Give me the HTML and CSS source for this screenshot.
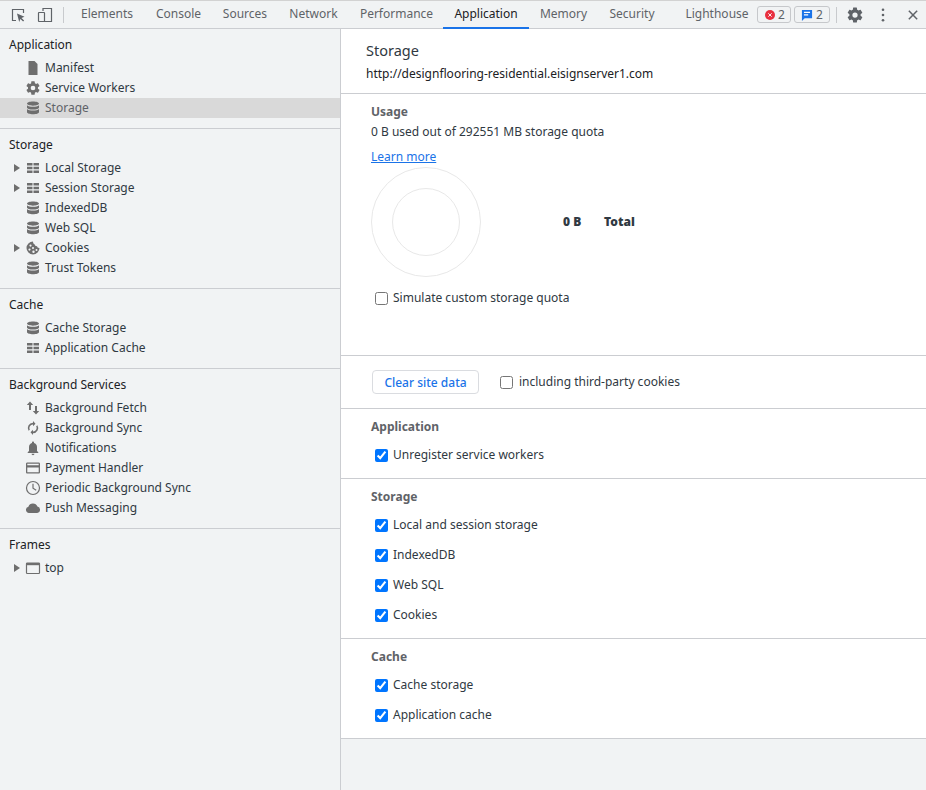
FILE: index.html
```html
<!DOCTYPE html>
<html lang="en">
<head>
<meta charset="utf-8">
<title>Storage - DevTools</title>
<link rel="stylesheet" href="styles.css">
</head>
<body>
<svg class="defs" width="0" height="0" aria-hidden="true">
  <symbol id="i-db" viewBox="0 0 16 16"><path d="M8 1.5c3.3 0 6 .9 6 2.1S11.300 5.700 8 5.700 2 4.800 2 3.600 4.700 1.500 8 1.500zM2 5.200c1 1 3.500 1.500 6 1.500s5-.5 6-1.500v2.300c0 1.200-2.700 2.100-6 2.100s-6-.9-6-2.100zM2 9.100c1 1 3.500 1.500 6 1.500s5-.5 6-1.500v2.900c0 1.300-2.700 2.300-6 2.300S2 13.300 2 12z"/></symbol>
  <symbol id="i-grid" viewBox="0 0 16 16"><path d="M2 3h5.500v2.600H2zM8.500 3H14v2.600H8.500zM2 6.700h5.500v2.600H2zM8.500 6.700H14v2.600H8.500zM2 10.400h5.500V13H2zM8.500 10.400H14V13H8.500z"/></symbol>
  <symbol id="i-gear" viewBox="0 0 24 24"><path d="M19.400 13c.04-.3.1-.65.100-1s-.03-.7-.08-1l2.100-1.650c.2-.15.25-.42.120-.64l-2-3.460c-.12-.22-.39-.3-.61-.22l-2.490 1c-.52-.4-1.080-.73-1.690-.98l-.38-2.650A.49.49 0 0 0 14 2h-4c-.25 0-.46.18-.49.42l-.38 2.650c-.61.25-1.170.59-1.690.98l-2.490-1c-.23-.09-.49 0-.61.22l-2 3.460c-.13.22-.07.49.12.640L4.570 11c-.05.32-.07.660-.07 1s.02.680.07 1l-2.110 1.650c-.19.150-.25.420-.12.640l2 3.460c.12.220.39.3.61.220l2.490-1c.52.4 1.080.73 1.690.98l.38 2.650c.03.24.24.42.49.42h4c.25 0 .46-.18.49-.42l.38-2.650c.61-.25 1.170-.59 1.690-.98l2.490 1c.23.09.49 0 .61-.22l2-3.460c.12-.22.07-.49-.12-.64zM12 15.500a3.500 3.500 0 1 1 0-7 3.500 3.500 0 0 1 0 7z"/></symbol>
</svg>

<div class="app">
  <header class="toolbar">
    <div class="tool-left">
      <svg class="tool-ico" viewBox="0 0 16 16" width="16" height="16"><path class="ln" d="M6 13.500H2.500V2.500h11V6"/><path class="fl" d="M7 6.500l7.500 3.200-3 1.200 2.600 2.700-1 1-2.700-2.700-1.200 3z"/></svg>
      <svg class="tool-ico dev" viewBox="0 0 16 16" width="16" height="16"><path class="ln" d="M6 4V1.500h8.500v13H7"/><rect class="ln" x="1.500" y="5.500" width="6" height="9" rx=".5"/></svg>
      <span class="vsep"></span>
    </div>
    <nav class="tabs">
      <a class="tab">Elements</a><a class="tab">Console</a><a class="tab">Sources</a><a class="tab">Network</a><a class="tab">Performance</a><a class="tab active">Application</a><a class="tab">Memory</a><a class="tab">Security</a><span></span><a class="tab">Lighthouse</a>
    </nav>
    <div class="tool-right">
      <span class="badge"><svg viewBox="0 0 12 12" width="10" height="10"><circle cx="6" cy="6" r="6" fill="#e8303f"/><path d="M4 4l4 4M8 4l-4 4" stroke="#fff" stroke-width="1.100"/></svg>2</span>
      <span class="badge info"><svg viewBox="0 0 13 13" width="12" height="12"><path fill="#1a73e8" d="M1 1h11v9H4l-3 3z"/><path d="M3.200 3.700h6.600M3.200 6.400h4.600" stroke="#fff" stroke-width="1.200"/></svg>2</span>
      <span class="vsep wide"></span>
      <svg class="gear" viewBox="0 0 24 24" width="18" height="18"><use href="#i-gear"/></svg>
      <svg class="kebab" viewBox="0 0 4 16" width="4" height="14"><circle cx="2" cy="2" r="1.500"/><circle cx="2" cy="8" r="1.500"/><circle cx="2" cy="14" r="1.500"/></svg>
      <svg class="close" viewBox="0 0 12 12" width="10" height="10"><path d="M1 1l10 10M11 1L1 11"/></svg>
    </div>
  </header>

  <div class="body">
    <aside class="sidebar">
      <section class="side-sec">
        <h3 class="side-head">Application</h3>
        <div class="row"><span class="arrow"></span><svg class="ico" viewBox="0 0 16 16"><path d="M3.500 1H9.500L12.500 4V15H3.500z"/></svg><span>Manifest</span></div>
        <div class="row"><span class="arrow"></span><svg class="ico" viewBox="0 0 24 24"><use href="#i-gear"/></svg><span>Service Workers</span></div>
        <div class="row selected"><span class="arrow"></span><svg class="ico"><use href="#i-db"/></svg><span>Storage</span></div>
      </section>
      <section class="side-sec">
        <h3 class="side-head">Storage</h3>
        <div class="row"><span class="arrow on"></span><svg class="ico"><use href="#i-grid"/></svg><span>Local Storage</span></div>
        <div class="row"><span class="arrow on"></span><svg class="ico"><use href="#i-grid"/></svg><span>Session Storage</span></div>
        <div class="row"><span class="arrow"></span><svg class="ico"><use href="#i-db"/></svg><span>IndexedDB</span></div>
        <div class="row"><span class="arrow"></span><svg class="ico"><use href="#i-db"/></svg><span>Web SQL</span></div>
        <div class="row"><span class="arrow on"></span><svg class="ico" viewBox="0 0 16 16"><path fill-rule="evenodd" d="M8 1.500a6.500 6.500 0 1 0 6.500 6.500c-1.300.2-2.200-.5-2.400-1.700-1.300.1-2.300-.7-2.500-2C8.500 4 8 2.800 8 1.500zM5.500 4.500a1.100 1.100 0 1 1 0 2.200 1.100 1.100 0 0 1 0-2.200zM4.500 8.500a1.100 1.100 0 1 1 0 2.200 1.100 1.100 0 0 1 0-2.200zM8 7a1 1 0 1 1 0 2 1 1 0 0 1 0-2zM8.500 10.500a1.200 1.200 0 1 1 0 2.400 1.200 1.200 0 0 1 0-2.400zM11.500 9a1 1 0 1 1 0 2 1 1 0 0 1 0-2z"/></svg><span>Cookies</span></div>
        <div class="row"><span class="arrow"></span><svg class="ico"><use href="#i-db"/></svg><span>Trust Tokens</span></div>
      </section>
      <section class="side-sec">
        <h3 class="side-head">Cache</h3>
        <div class="row"><span class="arrow"></span><svg class="ico"><use href="#i-db"/></svg><span>Cache Storage</span></div>
        <div class="row"><span class="arrow"></span><svg class="ico"><use href="#i-grid"/></svg><span>Application Cache</span></div>
      </section>
      <section class="side-sec">
        <h3 class="side-head">Background Services</h3>
        <div class="row"><span class="arrow"></span><svg class="ico" viewBox="0 0 16 16"><path d="M5 1.500L8.200 5H6v5H4V5H1.800zM11 14.500L7.800 11H10V6h2v5h2.200z"/></svg><span>Background Fetch</span></div>
        <div class="row"><span class="arrow"></span><svg class="ico" viewBox="0 0 16 16"><path d="M8 1v1.800a5.200 5.200 0 0 0-4.400 8L4.800 9.700A3.500 3.500 0 0 1 8 4.500v1.800l2.500-2.650zM12.400 5.200l-1.200 1.100A3.500 3.500 0 0 1 8 11.500V9.700L5.500 12.350 8 15v-1.800a5.200 5.200 0 0 0 4.400-8z"/></svg><span>Background Sync</span></div>
        <div class="row"><span class="arrow"></span><svg class="ico" viewBox="0 0 16 16"><path d="M8 1.500c.6 0 1 .4 1 1v.6c1.800.5 3 2 3 4V11l1.300 1.300v.7H2.700v-.7L4 11V7.100c0-2 1.200-3.500 3-4v-.6c0-.6.4-1 1-1zM6.500 13.800h3A1.500 1.500 0 0 1 8 15.200a1.500 1.500 0 0 1-1.500-1.400z"/></svg><span>Notifications</span></div>
        <div class="row"><span class="arrow"></span><svg class="ico" viewBox="0 0 16 16"><path fill-rule="evenodd" d="M2.300 2.500h11.400c.7 0 1.300.6 1.300 1.300v8.400c0 .7-.6 1.300-1.300 1.300H2.300c-.7 0-1.300-.6-1.300-1.300V3.800c0-.7.600-1.300 1.300-1.300zM2.300 3.800v1.400h11.400V3.800zM2.300 7.600v4.600h11.400V7.600z"/></svg><span>Payment Handler</span></div>
        <div class="row"><span class="arrow"></span><svg class="ico" viewBox="0 0 16 16"><circle class="ol" cx="8" cy="8" r="6.500"/><path class="ol" d="M8 3.800V8.200l3.200 2"/></svg><span>Periodic Background Sync</span></div>
        <div class="row"><span class="arrow"></span><svg class="ico" viewBox="0 0 16 16"><path d="M4 13a3.200 3.200 0 0 1-.6-6.300A4.800 4.800 0 0 1 12.400 6.500 3.300 3.300 0 0 1 12.200 13z"/></svg><span>Push Messaging</span></div>
      </section>
      <section class="side-sec">
        <h3 class="side-head">Frames</h3>
        <div class="row"><span class="arrow on"></span><svg class="ico" viewBox="0 0 16 16"><rect class="ol" x="1.500" y="3" width="13" height="10.500" rx=".8"/><path d="M1.500 3h13v2.200h-13z"/></svg><span>top</span></div>
      </section>
    </aside>

    <main class="main">
      <div class="main-head">
        <h1 class="title">Storage</h1>
        <div class="origin">http://designflooring-residential.eisignserver1.com</div>
      </div>

      <section class="sec usage">
        <h2 class="sec-title">Usage</h2>
        <p class="quota">0 B used out of 292551 MB storage quota</p>
        <a class="link" href="#">Learn more</a>
        <div class="chart-wrap">
          <svg class="chart" width="110" height="110" viewBox="0 0 110 110"><circle cx="55" cy="55" r="54.500"/><circle cx="55" cy="55" r="33.500"/></svg>
          <div class="legend"><b class="lg-val">0 B</b><b>Total</b></div>
        </div>
        <label class="check sim"><input type="checkbox"><span>Simulate custom storage quota</span></label>
      </section>

      <section class="sec clear">
        <button class="btn" type="button">Clear site data</button>
        <label class="check third"><input type="checkbox"><span>including third-party cookies</span></label>
      </section>

      <section class="sec opts">
        <h2 class="sec-title">Application</h2>
        <label class="check"><input type="checkbox" checked><span>Unregister service workers</span></label>
      </section>

      <section class="sec opts">
        <h2 class="sec-title">Storage</h2>
        <label class="check"><input type="checkbox" checked><span>Local and session storage</span></label>
        <label class="check"><input type="checkbox" checked><span>IndexedDB</span></label>
        <label class="check"><input type="checkbox" checked><span>Web SQL</span></label>
        <label class="check"><input type="checkbox" checked><span>Cookies</span></label>
      </section>

      <section class="sec opts">
        <h2 class="sec-title">Cache</h2>
        <label class="check"><input type="checkbox" checked><span>Cache storage</span></label>
        <label class="check"><input type="checkbox" checked><span>Application cache</span></label>
      </section>
    </main>
  </div>
</div>
</body>
</html>
```
FILE: styles.css
```css
* { box-sizing: border-box; }
html, body { margin: 0; height: 100%; }
body { font: 12px/18px "Noto Sans", sans-serif; color: #303942; background: #f1f3f4; overflow: hidden; }
.defs { position: absolute; }
.app { height: 790px; display: flex; flex-direction: column; }

.toolbar { height: 29px; flex: none; display: flex; align-items: stretch; background: #f1f3f4; border-top: 1px solid #d2d2d2; border-bottom: 1px solid #cbcdd1; }
.tool-left { width: 70px; display: flex; align-items: center; padding-left: 10px; }
.tool-ico { flex: none; }
.tool-ico.dev { margin-left: 11px; }
.ln { fill: none; stroke: #5f6368; stroke-width: 1.200; }
.fl { fill: #5f6368; }
.vsep { width: 1px; height: 16px; background: #c8cacd; margin-left: 10px; }
.tabs { display: grid; grid-template-columns: 74px 69px 64px 73px 93px 86px 69px 68px 9px 84px; }
.tab { display: flex; align-items: center; justify-content: center; color: #5f6368; height: 27px; padding-bottom: 1px; }
.tab.active { color: #202124; border-bottom: 2px solid #1a73e8; height: 28px; padding-bottom: 0; }
.tool-right { flex: 1; display: flex; align-items: center; padding-left: 0; margin-left: -2px; }
.badge { display: inline-flex; align-items: center; gap: 3px; height: 17px; width: 34px; padding-left: 7px; margin-right: 3px; border: 1px solid #c6c8cb; border-radius: 3px; color: #5f6368; }
.badge.info { width: 36px; padding-left: 6px; }
.vsep.wide { margin-left: 3px; margin-right: 9px; }
.gear { fill: #5f6368; flex: none; }
.kebab { fill: #5f6368; margin-left: 17px; flex: none; }
.close { fill: none; stroke: #5f6368; stroke-width: 1.800; margin-left: 23px; flex: none; }

.body { flex: 1; display: flex; min-height: 0; }
.sidebar { width: 341px; flex: none; background: #f1f3f4; border-right: 1px solid #cbcdd1; color: #303942; }
.side-sec { padding-bottom: 10px; border-bottom: 1px solid #cbcdd1; }
.side-sec:last-child { border-bottom: 0; }
.side-head { margin: 0; height: 29px; padding: 7px 0 0 9px; font: 400 12px/18px "Noto Sans", sans-serif; color: #202124; }
.row { height: 20px; display: flex; align-items: center; padding-left: 14px; }
.row.selected { background: #d9d9d9; color: #5f6368; }
.arrow { width: 10px; flex: none; }
.arrow.on { width: 0; height: 0; margin-right: 4px; border-left: 6px solid #6e6e6e; border-top: 4px solid transparent; border-bottom: 4px solid transparent; }
.ico { width: 16px; height: 16px; margin: 0 4px 0 1px; fill: #6e6e6e; flex: none; }
.ol { fill: none; stroke: #6e6e6e; stroke-width: 1.200; }

.main { flex: 1; min-width: 0; display: flex; flex-direction: column; }
.main-head { background: #fff; height: 65px; padding: 12px 0 0 25px; border-bottom: 1px solid #cbcdd1; }
.title { margin: 0; font: 400 14.500px/18px "Noto Sans", sans-serif; color: #303942; }
.origin { margin-top: 6px; color: #202124; }
.sec { background: #fff; padding-left: 30px; border-bottom: 1px solid #cbcdd1; }
.sec-title { margin: 0 0 2px; padding-top: 9px; height: 29px; font: 700 12px/18px "Noto Sans", sans-serif; color: #5f6368; }
.opts { padding-bottom: 8px; }
.usage { height: 262px; }
.quota { margin: -2px 0 0; }
.link { display: inline-block; margin-top: 7px; color: #1a73e8; text-decoration: underline; }
.chart-wrap { display: flex; align-items: center; margin-top: 1px; }
.chart { flex: none; }
.chart circle { fill: none; stroke: #e8e8e8; stroke-width: 1; }
.legend { display: flex; align-items: center; margin-left: 82px; font-weight: 700; }
.legend b { color: #303942; }
.lg-val { width: 41px; }
.check { display: flex; align-items: center; height: 30px; color: #303942; }
.check input { width: 13px; height: 13px; margin: 0 5px 0 4px; flex: none; }
.sim { margin-top: 6px; }
.clear { height: 53px; display: flex; align-items: center; }
.btn { width: 107px; height: 24px; margin: 0 21px 0 1px; padding: 0; background: #fff; border: 1px solid #dadce0; border-radius: 4px; font: 500 12px "Noto Sans", sans-serif; color: #1a73e8; }
.third { height: 24px; }
.third input { margin: 0 6px 0 0; }
```
